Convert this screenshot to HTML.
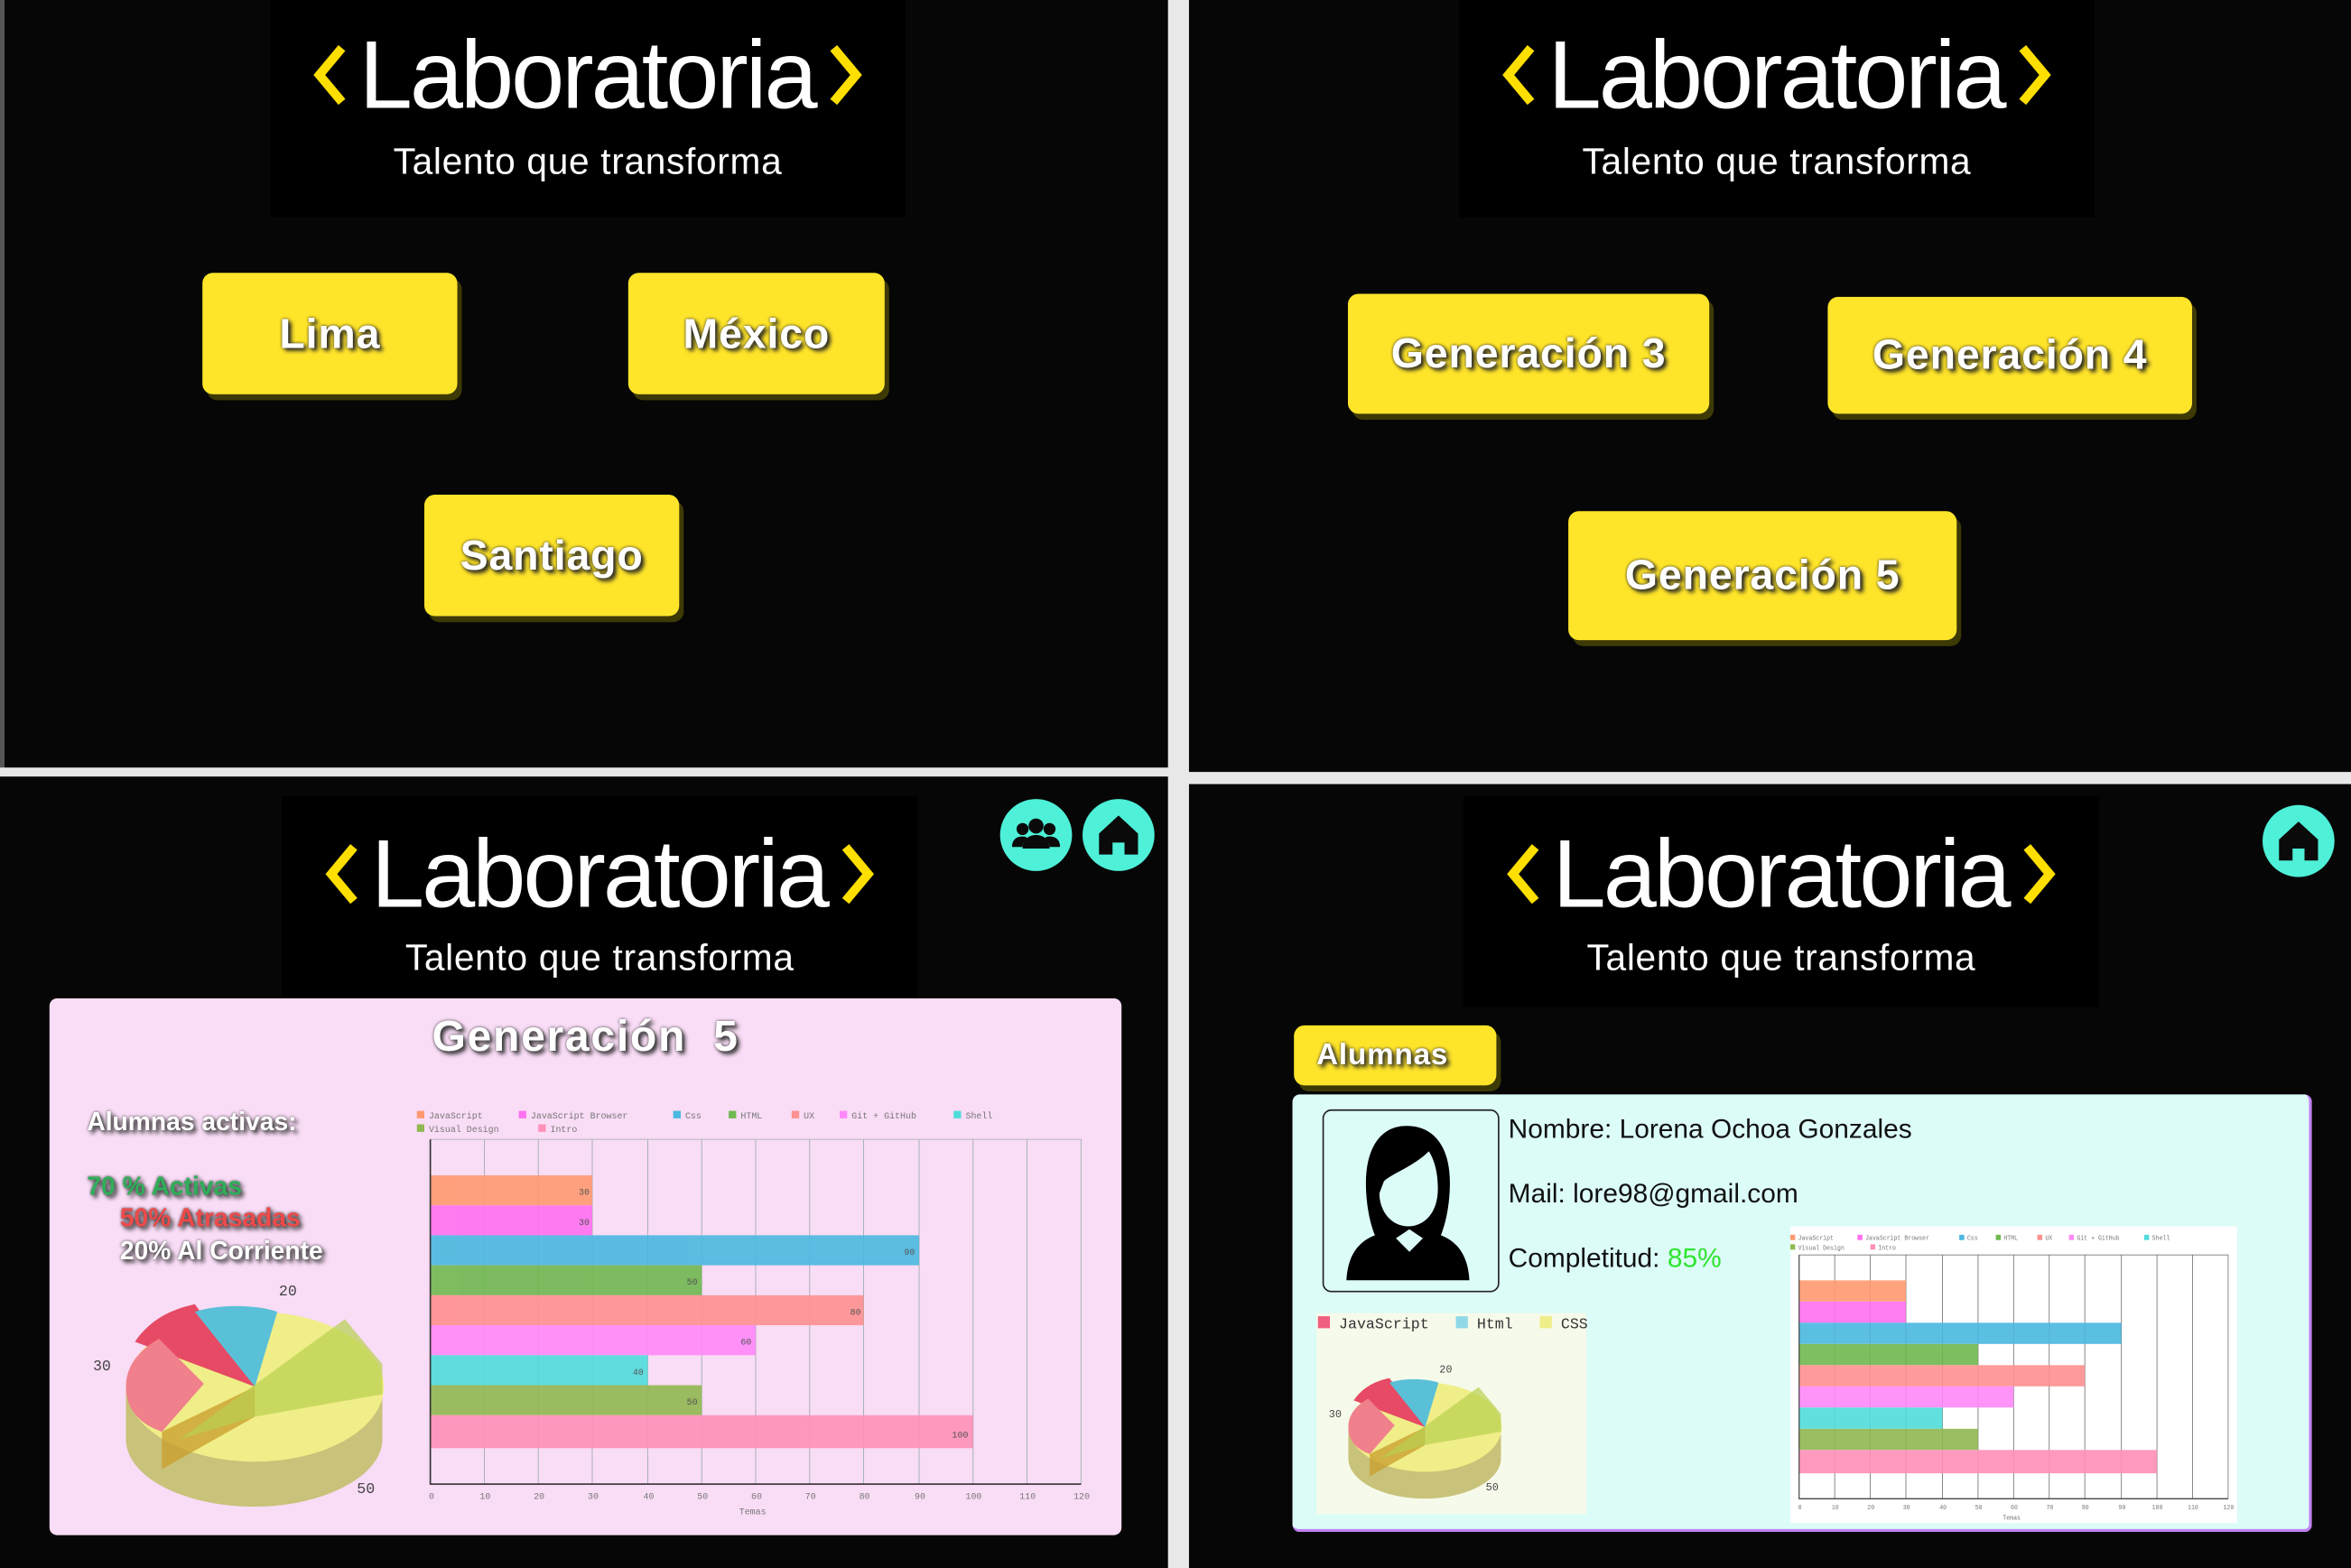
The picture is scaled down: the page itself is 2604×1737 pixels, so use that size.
<!DOCTYPE html>
<html><head><meta charset="utf-8">
<style>
*{margin:0;padding:0;box-sizing:border-box}
html,body{width:2604px;height:1737px;overflow:hidden;background:#e8e8e8}
#w{position:absolute;left:0;top:0;width:1568px;height:1046px;transform:scale(1.66071);transform-origin:0 0;font-family:"Liberation Sans",sans-serif}
.q{position:absolute;background:#060606}
.logo{position:absolute;background:#000;width:424px;height:140px;text-align:center;color:#fff}
.logo .t{position:absolute;left:0;right:0;top:14px;height:72px;display:flex;align-items:center;justify-content:center;font-size:64px;letter-spacing:-1.8px;line-height:72px}
.logo .t span{margin:0 9px 0 8px}
.logo .s{position:absolute;left:0;right:0;top:95px;font-size:24.5px;letter-spacing:.4px}
.btn{position:absolute;background:#ffe52a;border-radius:7px;box-shadow:3px 4px 0 #3e3a06;color:#fff;font-weight:700;font-size:28px;text-align:center;text-shadow:2px 2px 3px #222,0 0 2px #333;display:flex;align-items:center;justify-content:center;letter-spacing:.5px}
.ic{position:absolute;width:48px;height:48px;border-radius:50%;background:#4ef0d8}
.sh{color:#fff;font-weight:700;text-shadow:2px 2px 3px #333,0 0 2px #444;position:absolute}
</style></head><body><div id="w">
<!-- TL -->
<div class="q" style="left:3px;top:0;width:776px;height:512px"></div>
<div class="q" style="left:0;top:0;width:3px;height:512px;background:#555"></div>
<div class="logo" style="left:180px;top:0;height:145px"><div class="t"><svg width="24" height="40" viewBox="0 0 24 40"><path d="M20 2L5 20l15 18" fill="none" stroke="#ffdf00" stroke-width="6"/></svg><span>Laboratoria</span><svg width="24" height="40" viewBox="0 0 24 40"><path d="M4 2l15 18L4 38" fill="none" stroke="#ffdf00" stroke-width="6"/></svg></div><div class="s" style="top:95px">Talento que transforma</div></div>
<div class="btn" style="left:135px;top:182px;width:170px;height:81px">Lima</div>
<div class="btn" style="left:419px;top:182px;width:171px;height:81px">México</div>
<div class="btn" style="left:283px;top:330px;width:170px;height:81px">Santiago</div>
<!-- TR -->
<div class="q" style="left:793px;top:0;width:775px;height:515px"></div>
<div class="logo" style="left:973px;top:0;height:145px"><div class="t"><svg width="24" height="40" viewBox="0 0 24 40"><path d="M20 2L5 20l15 18" fill="none" stroke="#ffdf00" stroke-width="6"/></svg><span>Laboratoria</span><svg width="24" height="40" viewBox="0 0 24 40"><path d="M4 2l15 18L4 38" fill="none" stroke="#ffdf00" stroke-width="6"/></svg></div><div class="s" style="top:95px">Talento que transforma</div></div>
<div class="btn" style="left:899px;top:196px;width:241px;height:80px">Generación 3</div>
<div class="btn" style="left:1219px;top:198px;width:243px;height:78px">Generación 4</div>
<div class="btn" style="left:1046px;top:341px;width:259px;height:86px">Generación 5</div>
<!-- BL -->
<div class="q" style="left:0;top:518px;width:779px;height:528px"></div>
<div class="logo" style="left:188px;top:531px;height:134px"><div class="t" style="top:16px"><svg width="24" height="40" viewBox="0 0 24 40"><path d="M20 2L5 20l15 18" fill="none" stroke="#ffdf00" stroke-width="6"/></svg><span>Laboratoria</span><svg width="24" height="40" viewBox="0 0 24 40"><path d="M4 2l15 18L4 38" fill="none" stroke="#ffdf00" stroke-width="6"/></svg></div><div class="s" style="top:95px">Talento que transforma</div></div>
<div class="ic" style="left:667px;top:533px"><svg width="48" height="48" viewBox="0 0 48 48"><g fill="#0a0a0a"><circle cx="24" cy="18" r="5"/><path d="M15 33c0-6 4-9 9-9s9 3 9 9z"/><circle cx="15" cy="20" r="4"/><path d="M8 32c0-5 3-7 7-7 1 0 2 0 3 1-2 2-3 4-3 6z"/><circle cx="33" cy="20" r="4"/><path d="M40 32c0-5-3-7-7-7-1 0-2 0-3 1 2 2 3 4 3 6z"/></g></svg></div>
<div class="ic" style="left:722px;top:533px"><svg width="48" height="48" viewBox="0 0 48 48"><path d="M24 11L11 23v14h9v-8h8v8h9V23z" fill="#0a0a0a"/></svg></div>
<div style="position:absolute;left:33px;top:666px;width:715px;height:358px;background:#f9dcf6;border-radius:5px"></div>
<div class="sh" style="left:33px;width:715px;top:676px;text-align:center;font-size:29px;letter-spacing:1px">Generación &nbsp;5</div>
<div class="sh" style="left:58px;top:739px;font-size:17px">Alumnas activas:</div>
<div class="sh" style="left:58px;top:782px;font-size:17px;color:#2fae5a">70 % Activas</div>
<div class="sh" style="left:80px;top:803px;font-size:17px;color:#ee4a4a">50% Atrasadas</div>
<div class="sh" style="left:80px;top:825px;font-size:17px">20% Al Corriente</div>
<svg style="position:absolute;left:60px;top:850px" width="210" height="160" viewBox="0 0 210 160">
<text x="126" y="14" font-size="10" fill="#444" font-family="Liberation Mono">20</text>
<text x="2" y="64" font-size="10" fill="#444" font-family="Liberation Mono">30</text>
<text x="178" y="146" font-size="10" fill="#444" font-family="Liberation Mono">50</text>
<path d="M24 75v35c0 25 38 45 86 45 45 0 85-20 85-45V75z" fill="#c8c27a"/>
<ellipse cx="110" cy="75" rx="86" ry="50" fill="#f0ee88"/>
<path d="M110 75L30 45c10-15 25-22 40-25z" fill="#e64a64"/>
<path d="M110 75L70 25c15-5 40-5 55 0z" fill="#5ac0d8"/>
<path d="M110 75L48 105 48 130 110 95z" fill="#caa030" opacity=".8"/>
<path d="M60 110L170 30 195 60 195 80 110 95z" fill="#b8d050" opacity=".7"/>
<path d="M24 75c0-15 10-25 22-32l30 30-28 32c-15-5-24-15-24-30z" fill="#f0808c"/>
</svg>
<svg style="position:absolute;left:278px;top:733px" width="452" height="280" viewBox="0 0 452 280" font-family="Liberation Mono" font-size="6" fill="#777">
<rect x="0" y="0" width="452" height="280" fill="#f9dcf6"/>
<rect x="0" y="8" width="5" height="5" fill="#ff9a70"/><text x="8" y="13">JavaScript</text>
<rect x="68" y="8" width="5" height="5" fill="#ff70f0"/><text x="76" y="13">JavaScript Browser</text>
<rect x="171" y="8" width="5" height="5" fill="#4ab8e0"/><text x="179" y="13">Css</text>
<rect x="208" y="8" width="5" height="5" fill="#70b850"/><text x="216" y="13">HTML</text>
<rect x="250" y="8" width="5" height="5" fill="#ff9090"/><text x="258" y="13">UX</text>
<rect x="282" y="8" width="5" height="5" fill="#ff88f8"/><text x="290" y="13">Git + GitHub</text>
<rect x="358" y="8" width="5" height="5" fill="#50dcdc"/><text x="366" y="13">Shell</text>
<rect x="0" y="17" width="5" height="5" fill="#90b850"/><text x="8" y="22">Visual Design</text>
<rect x="81" y="17" width="5" height="5" fill="#ff90b8"/><text x="89" y="22">Intro</text>
<g fill="none" stroke="#9aa" stroke-width=".5"><path d="M45 27v230M81 27v230M117 27v230M154 27v230M190 27v230M226 27v230M262 27v230M298 27v230M335 27v230M371 27v230M407 27v230M443 27v230M9 27h434"/></g>
<g opacity=".9"><rect x="9" y="51" width="108" height="20" fill="#ff9a70"/><rect x="9" y="71" width="108" height="20" fill="#ff70f0"/><rect x="9" y="91" width="326" height="20" fill="#4ab8e0"/><rect x="9" y="111" width="181" height="20" fill="#70b850"/><rect x="9" y="131" width="289" height="20" fill="#ff9090"/><rect x="9" y="151" width="217" height="20" fill="#ff88f8"/><rect x="9" y="171" width="145" height="20" fill="#50dcdc"/><rect x="9" y="191" width="181" height="20" fill="#90b850"/><rect x="9" y="211" width="362" height="22" fill="#ff90b8"/></g>
<g fill="#555"><text x="108" y="64">30</text><text x="108" y="84">30</text><text x="325" y="104">90</text><text x="180" y="124">50</text><text x="289" y="144">80</text><text x="216" y="164">60</text><text x="144" y="184">40</text><text x="180" y="204">50</text><text x="357" y="226">100</text></g>
<path d="M9 27v230h434" stroke="#333" fill="none"/>
<g><text x="8" y="267">0</text><text x="42" y="267">10</text><text x="78" y="267">20</text><text x="114" y="267">30</text><text x="151" y="267">40</text><text x="187" y="267">50</text><text x="223" y="267">60</text><text x="259" y="267">70</text><text x="295" y="267">80</text><text x="332" y="267">90</text><text x="366" y="267">100</text><text x="402" y="267">110</text><text x="438" y="267">120</text><text x="215" y="277">Temas</text></g>
</svg>
<!-- BR -->
<div class="q" style="left:793px;top:523px;width:775px;height:523px"></div>
<div class="q" style="left:793px;top:515px;width:775px;height:8px;background:#e8e8e8"></div>
<div class="logo" style="left:976px;top:531px;height:141px"><div class="t" style="top:16px"><svg width="24" height="40" viewBox="0 0 24 40"><path d="M20 2L5 20l15 18" fill="none" stroke="#ffdf00" stroke-width="6"/></svg><span>Laboratoria</span><svg width="24" height="40" viewBox="0 0 24 40"><path d="M4 2l15 18L4 38" fill="none" stroke="#ffdf00" stroke-width="6"/></svg></div><div class="s" style="top:95px">Talento que transforma</div></div>
<div class="ic" style="left:1509px;top:537px"><svg width="48" height="48" viewBox="0 0 48 48"><path d="M24 11L11 23v14h9v-8h8v8h9V23z" fill="#0a0a0a"/></svg></div>
<div class="btn" style="left:863px;top:684px;width:135px;height:40px;font-size:20px;justify-content:flex-start;padding-left:15px">Alumnas</div>
<div style="position:absolute;left:862px;top:730px;width:680px;height:292px;background:#dcfcf8;border-radius:5px;border-right:2px solid #c080f0;border-bottom:2px solid #c080f0"></div>
<div style="position:absolute;left:882px;top:740px;width:118px;height:122px;border:1px solid #222;border-radius:6px"><svg width="116" height="120" viewBox="0 0 116 120"><path d="M55 10c-18 0-27 16-27 38 0 12 2 25 6 35-10 4-18 12-19 30h82c-1-18-9-26-19-30 4-10 6-23 6-35 0-22-9-38-29-38z" fill="#000"/><path d="M40 47c5-5 20-10 30-20 5 8 6 18 6 25 0 16-9 25-20 25s-19-10-19-22z" fill="#dcfcf8"/><path d="M48 85l9 9 9-9-9-6z" fill="#dcfcf8"/></svg></div>
<div style="position:absolute;left:1006px;top:743px;font-size:18px;color:#111">Nombre: Lorena Ochoa Gonzales</div>
<div style="position:absolute;left:1006px;top:786px;font-size:18px;color:#111">Mail: lore98@gmail.com</div>
<div style="position:absolute;left:1006px;top:829px;font-size:18px;color:#111">Completitud: <span style="color:#2ee52e">85%</span></div>
<div style="position:absolute;left:878px;top:876px;width:180px;height:134px;background:#f6faea"></div>
<div style="position:absolute;left:879px;top:878px;font-family:'Liberation Mono';font-size:10px;color:#333"><span style="background:#f06080;display:inline-block;width:8px;height:8px"></span> JavaScript &nbsp;&nbsp;<span style="background:#90d8e8;display:inline-block;width:8px;height:8px"></span> Html &nbsp;&nbsp;<span style="background:#f0ee88;display:inline-block;width:8px;height:8px"></span> CSS</div>
<svg style="position:absolute;left:885px;top:905px" width="125" height="100" viewBox="0 0 210 160">
<text x="126" y="14" font-size="12" fill="#444" font-family="Liberation Mono">20</text>
<text x="2" y="64" font-size="12" fill="#444" font-family="Liberation Mono">30</text>
<text x="178" y="146" font-size="12" fill="#444" font-family="Liberation Mono">50</text>
<path d="M24 75v35c0 25 38 45 86 45 45 0 85-20 85-45V75z" fill="#c8c27a"/>
<ellipse cx="110" cy="75" rx="86" ry="50" fill="#f0ee88"/>
<path d="M110 75L30 45c10-15 25-22 40-25z" fill="#e64a64"/>
<path d="M110 75L70 25c15-5 40-5 55 0z" fill="#5ac0d8"/>
<path d="M110 75L48 105 48 130 110 95z" fill="#caa030" opacity=".8"/>
<path d="M60 110L170 30 195 60 195 80 110 95z" fill="#b8d050" opacity=".7"/>
<path d="M24 75c0-15 10-25 22-32l30 30-28 32c-15-5-24-15-24-30z" fill="#f0808c"/>
</svg>
<svg style="position:absolute;left:1194px;top:818px" width="298" height="198" viewBox="0 0 452 280" preserveAspectRatio="none" font-family="Liberation Mono" font-size="6" fill="#777">
<rect x="0" y="0" width="452" height="280" fill="#fff"/>
<rect x="0" y="8" width="5" height="5" fill="#ff9a70"/><text x="8" y="13">JavaScript</text>
<rect x="68" y="8" width="5" height="5" fill="#ff70f0"/><text x="76" y="13">JavaScript Browser</text>
<rect x="171" y="8" width="5" height="5" fill="#4ab8e0"/><text x="179" y="13">Css</text>
<rect x="208" y="8" width="5" height="5" fill="#70b850"/><text x="216" y="13">HTML</text>
<rect x="250" y="8" width="5" height="5" fill="#ff9090"/><text x="258" y="13">UX</text>
<rect x="282" y="8" width="5" height="5" fill="#ff88f8"/><text x="290" y="13">Git + GitHub</text>
<rect x="358" y="8" width="5" height="5" fill="#50dcdc"/><text x="366" y="13">Shell</text>
<rect x="0" y="17" width="5" height="5" fill="#90b850"/><text x="8" y="22">Visual Design</text>
<rect x="81" y="17" width="5" height="5" fill="#ff90b8"/><text x="89" y="22">Intro</text>
<g fill="none" stroke="#777" stroke-width=".8"><path d="M45 27v230M81 27v230M117 27v230M154 27v230M190 27v230M226 27v230M262 27v230M298 27v230M335 27v230M371 27v230M407 27v230M443 27v230M9 27h434"/></g>
<g opacity=".9"><rect x="9" y="51" width="108" height="20" fill="#ff9a70"/><rect x="9" y="71" width="108" height="20" fill="#ff70f0"/><rect x="9" y="91" width="326" height="20" fill="#4ab8e0"/><rect x="9" y="111" width="181" height="20" fill="#70b850"/><rect x="9" y="131" width="289" height="20" fill="#ff9090"/><rect x="9" y="151" width="217" height="20" fill="#ff88f8"/><rect x="9" y="171" width="145" height="20" fill="#50dcdc"/><rect x="9" y="191" width="181" height="20" fill="#90b850"/><rect x="9" y="211" width="362" height="22" fill="#ff90b8"/></g>
<path d="M9 27v230h434" stroke="#333" fill="none"/>
<g><text x="8" y="267">0</text><text x="42" y="267">10</text><text x="78" y="267">20</text><text x="114" y="267">30</text><text x="151" y="267">40</text><text x="187" y="267">50</text><text x="223" y="267">60</text><text x="259" y="267">70</text><text x="295" y="267">80</text><text x="332" y="267">90</text><text x="366" y="267">100</text><text x="402" y="267">110</text><text x="438" y="267">120</text><text x="215" y="277">Temas</text></g>
</svg>
</div></body></html>
